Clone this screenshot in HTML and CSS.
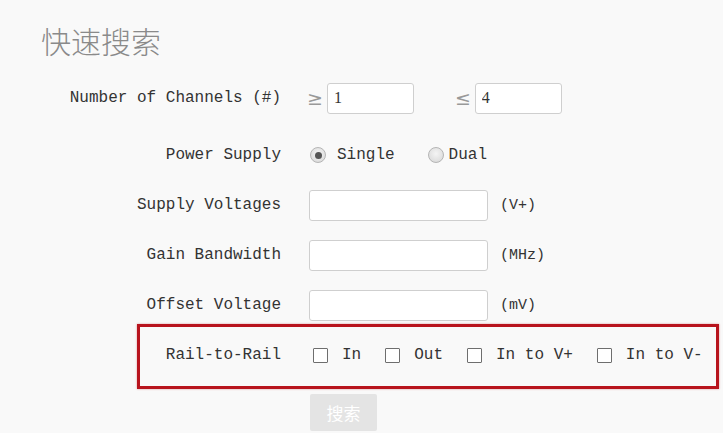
FILE: index.html
```html
<!DOCTYPE html>
<html lang="zh">
<head>
    <meta charset="UTF-8">
    <meta name="viewport" content="width=device-width, initial-scale=1.0">
    <title>快速搜索</title>
    <link rel="stylesheet" href="styles.css">
</head>
<body>
    <h2 class="title">快速搜索</h2>
    <form class="search-form">
        <div class="row row-first">
            <label class="label">Number of Channels (#)</label>
            <div class="field">
                <span class="sign">&ge;</span>
                <input type="text" class="input input-small" value="1">
                <span class="sign sign-gap">&le;</span>
                <input type="text" class="input input-small" value="4">
            </div>
        </div>
        <div class="row">
            <label class="label">Power Supply</label>
            <div class="field">
                <span class="radio checked"></span>
                <span class="radio-text">Single</span>
                <span class="radio"></span>
                <span class="radio-text radio-text-tight">Dual</span>
            </div>
        </div>
        <div class="row">
            <label class="label">Supply Voltages</label>
            <div class="field">
                <input type="text" class="input input-wide">
                <span class="unit">(V+)</span>
            </div>
        </div>
        <div class="row">
            <label class="label">Gain Bandwidth</label>
            <div class="field">
                <input type="text" class="input input-wide">
                <span class="unit">(MHz)</span>
            </div>
        </div>
        <div class="row">
            <label class="label">Offset Voltage</label>
            <div class="field">
                <input type="text" class="input input-wide">
                <span class="unit">(mV)</span>
            </div>
        </div>
        <div class="highlight">
            <div class="row">
                <label class="label">Rail-to-Rail</label>
                <div class="field checks">
                    <span class="check"></span><span class="check-text">In</span>
                    <span class="check"></span><span class="check-text">Out</span>
                    <span class="check"></span><span class="check-text">In to V+</span>
                    <span class="check"></span><span class="check-text">In to V-</span>
                </div>
            </div>
        </div>
        <button type="button" class="search-btn">搜索</button>
    </form>
</body>
</html>
```

FILE: styles.css
```css
body {
    margin: 0;
    padding: 0;
    background-color: #f9f9f9;
    font-family: "Liberation Mono", "Noto Sans CJK SC", monospace;
    color: #333;
    font-size: 16px;
}
.title {
    margin: 0;
    padding: 20px 0 0 41px;
    font-family: "Noto Sans CJK SC", sans-serif;
    font-size: 30px;
    font-weight: 300;
    line-height: 40px;
    color: #8a8a8a;
}
.search-form {
    margin-top: 20px;
}
.row {
    display: flex;
    align-items: center;
    height: 36px;
    margin-bottom: 14px;
    white-space: nowrap;
}
.row-first {
    margin-bottom: 21px;
}
.label {
    width: 281px;
    text-align: right;
    flex-shrink: 0;
}
.field {
    display: flex;
    align-items: center;
    margin-left: 28px;
}
.sign {
    color: #999;
    font-family: "DejaVu Sans", sans-serif;
    font-size: 19px;
    margin-left: -2px;
    margin-right: 4px;
}
.sign-gap {
    margin-left: 41px;
}
.input {
    box-sizing: border-box;
    height: 31px;
    border: 1px solid #cfcfcf;
    border-radius: 3px;
    background: #fff;
    font-family: "Liberation Serif", serif;
    font-size: 16px;
    color: #333;
    padding: 0 6px;
}
.input-small {
    width: 87px;
}
.input-wide {
    width: 179px;
}
.unit {
    margin-left: 12px;
    font-size: 15px;
}
.radio {
    box-sizing: border-box;
    width: 16px;
    height: 16px;
    border-radius: 50%;
    border: 1px solid #b5b5b5;
    background: radial-gradient(circle at 50% 40%, #f4f4f4, #d6d6d6);
    display: flex;
    align-items: center;
    justify-content: center;
    margin-left: 1px;
}
.radio.checked::after {
    content: "";
    width: 7px;
    height: 7px;
    border-radius: 50%;
    background: #555;
}
.radio-text {
    margin-left: 11px;
    margin-right: 32px;
}
.radio-text-tight {
    margin-left: 5px;
}
.highlight {
    margin: -13px 0 0 137px;
    width: 576px;
    border: 3px solid #b8141d;
    box-shadow: 0 0 2px rgba(184, 20, 29, 0.4);
    padding: 10px 0 13px;
}
.highlight .row {
    margin-bottom: 0;
}
.highlight .label {
    width: 141px;
}
.checks {
    margin-left: 32px;
}
.check {
    box-sizing: border-box;
    width: 15px;
    height: 15px;
    border: 1.5px solid #6e6e6e;
    border-radius: 1px;
    background: #fff;
    flex-shrink: 0;
}
.check-text {
    margin-left: 14px;
    margin-right: 24px;
}
.search-btn {
    display: block;
    margin: 5px 0 0 310px;
    width: 67px;
    height: 37px;
    border: none;
    border-radius: 2px;
    background: #e4e4e4;
    color: #fff;
    font-family: "Noto Sans CJK SC", sans-serif;
    font-size: 17px;
}
```
